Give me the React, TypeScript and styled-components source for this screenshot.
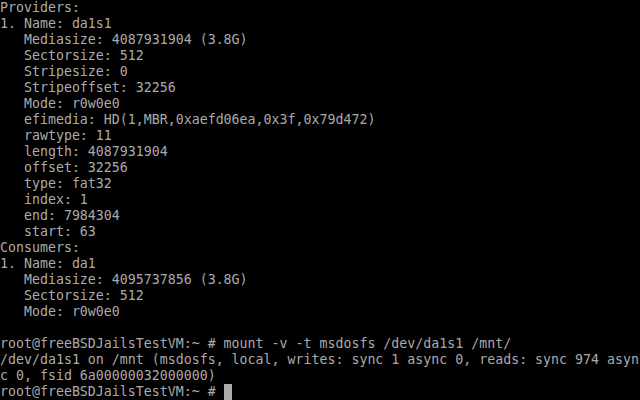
import React from "react";
import styled, { createGlobalStyle } from "styled-components";

const Global = createGlobalStyle`
  html, body { margin: 0; padding: 0; background: #000; }
  #root { width: 640px; height: 400px; }
`;

const Screen = styled.div`
  width: 640px;
  height: 400px;
  overflow: hidden;
  background: #000;
  color: #aaaaaa;
  font-family: "DejaVu Sans Mono", "Liberation Mono", monospace;
  font-size: 13.28px;
  line-height: 16px;
  display: flex;
  flex-direction: column;
`;

const Line = styled.div`
  height: 16px;
  white-space: pre;
  display: flex;
  align-items: flex-start;
`;

const Cursor = styled.span`
  display: inline-block;
  width: 8px;
  height: 16px;
  background: #aaaaaa;
`;

const lines = [
  "Providers:",
  "1. Name: da1s1",
  "   Mediasize: 4087931904 (3.8G)",
  "   Sectorsize: 512",
  "   Stripesize: 0",
  "   Stripeoffset: 32256",
  "   Mode: r0w0e0",
  "   efimedia: HD(1,MBR,0xaefd06ea,0x3f,0x79d472)",
  "   rawtype: 11",
  "   length: 4087931904",
  "   offset: 32256",
  "   type: fat32",
  "   index: 1",
  "   end: 7984304",
  "   start: 63",
  "Consumers:",
  "1. Name: da1",
  "   Mediasize: 4095737856 (3.8G)",
  "   Sectorsize: 512",
  "   Mode: r0w0e0",
  "",
  "root@freeBSDJailsTestVM:~ # mount -v -t msdosfs /dev/da1s1 /mnt/",
  "/dev/da1s1 on /mnt (msdosfs, local, writes: sync 1 async 0, reads: sync 974 asyn",
  "c 0, fsid 6a00000032000000)",
];

export default function App() {
  return (
    <>
      <Global />
      <Screen>
        {lines.map((l, i) => (
          <Line key={i}>{l}</Line>
        ))}
        <Line>
          {"root@freeBSDJailsTestVM:~ # "}
          <Cursor />
        </Line>
      </Screen>
    </>
  );
}
